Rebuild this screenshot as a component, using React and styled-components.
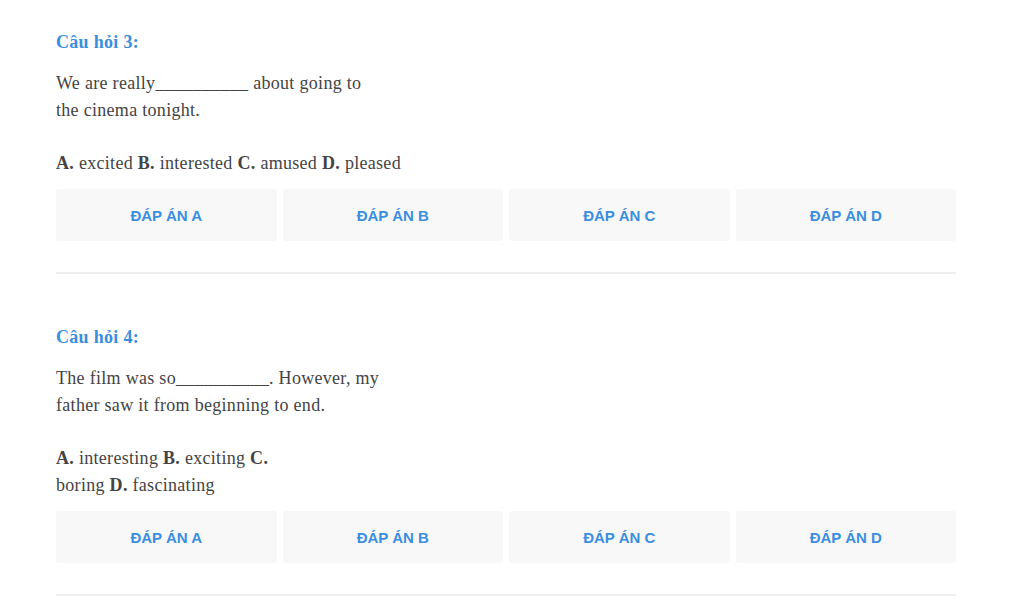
import React from 'react';
import styled, { createGlobalStyle } from 'styled-components';

const GlobalStyle = createGlobalStyle`
  body {
    margin: 0;
    background: #fff;
  }
`;

const Page = styled.div`
  width: 900px;
  padding: 29px 0 0 56px;
  font-family: 'Liberation Serif', 'Times New Roman', serif;
  font-size: 18px;
  line-height: 27px;
  letter-spacing: 0.3px;
  color: #444;
`;

const Question = styled.section`
  display: flex;
  flex-direction: column;
  padding-bottom: 31px;
  border-bottom: 2px solid #eeeeee;
  margin-bottom: 50px;
`;

const Title = styled.h3`
  margin: 0 0 14px;
  font-size: 18px;
  line-height: 27px;
  font-weight: bold;
  color: #3a8ee0;
`;

const Text = styled.p`
  margin: 0 0 26px;
`;

const Options = styled.p`
  margin: 0 0 12px;
  b {
    font-weight: bold;
  }
`;

const AnswerRow = styled.div`
  display: grid;
  grid-template-columns: repeat(4, 1fr);
  gap: 6px;
`;

const AnswerButton = styled.button`
  height: 52px;
  border: none;
  border-radius: 3px;
  background: #f8f8f8;
  color: #3a8ee0;
  font-family: 'Liberation Sans', Arial, sans-serif;
  font-size: 15px;
  font-weight: bold;
  letter-spacing: 0;
  text-transform: uppercase;
  cursor: pointer;
`;

const questions = [
  {
    n: 3,
    text: ['We are really__________ about going to', 'the cinema tonight.'],
    options: [
      [['A.', ' excited '], ['B.', ' interested '], ['C.', ' amused '], ['D.', ' pleased']],
    ],
  },
  {
    n: 4,
    text: ['The film was so__________. However, my', 'father saw it from beginning to end.'],
    options: [
      [['A.', ' interesting '], ['B.', ' exciting '], ['C.', '']],
      [['', 'boring '], ['D.', ' fascinating']],
    ],
  },
];

export default function App() {
  return (
    <>
      <GlobalStyle />
      <Page>
        {questions.map(q => (
          <Question key={q.n}>
            <Title>Câu hỏi {q.n}:</Title>
            <Text>
              {q.text[0]}
              <br />
              {q.text[1]}
            </Text>
            <Options>
              {q.options.map((line, i) => (
                <React.Fragment key={i}>
                  {i > 0 && <br />}
                  {line.map(([label, word], j) => (
                    <React.Fragment key={j}>
                      {label && <b>{label}</b>}
                      {word}
                    </React.Fragment>
                  ))}
                </React.Fragment>
              ))}
            </Options>
            <AnswerRow>
              {['A', 'B', 'C', 'D'].map(l => (
                <AnswerButton key={l}>Đáp án {l}</AnswerButton>
              ))}
            </AnswerRow>
          </Question>
        ))}
      </Page>
    </>
  );
}
